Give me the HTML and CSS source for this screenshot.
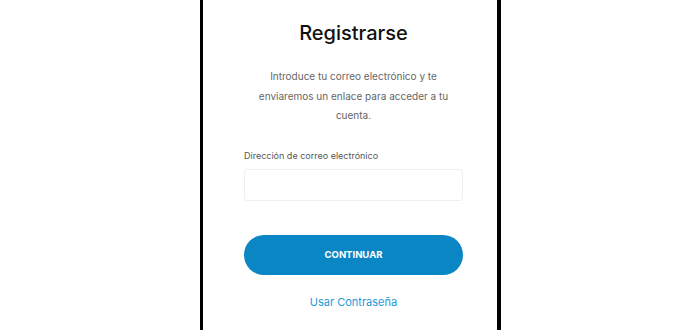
FILE: index.html
```html
<!DOCTYPE html>
<html lang="es">
<head>
    <meta charset="UTF-8">
    <meta name="viewport" content="width=device-width, initial-scale=1.0">
    <title>Registrarse</title>
    <link rel="stylesheet" href="styles.css">
</head>
<body>
    <div class="frame">
        <div class="signup">
            <h1>Registrarse</h1>
            <p class="intro">Introduce tu correo electrónico y te enviaremos un enlace para acceder a tu cuenta.</p>

            <label class="field-label" for="email">Dirección de correo electrónico</label>
            <input type="email" id="email" class="field">

            <button class="primary">CONTINUAR</button>
            <a href="#" class="link">Usar Contraseña</a>
        </div>
    </div>
</body>
</html>
```

FILE: styles.css
```css
body {
    margin: 0;
    background-color: #fff;
    font-family: Inter, "Noto Sans", sans-serif;
}
.frame {
    width: 294px;
    height: 330px;
    margin-left: 200px;
    border-left: 3px solid #000;
    border-right: 4px solid #000;
    background-color: #fff;
    overflow: hidden;
}
.signup {
    display: flex;
    flex-direction: column;
    padding: 21px 34px 0 41px;
}
.signup h1 {
    margin: 0;
    text-align: center;
    font-size: 20px;
    font-weight: 500;
    color: #111;
}
.intro {
    margin: 22px auto 0;
    width: 200px;
    text-align: center;
    font-size: 10px;
    line-height: 19.5px;
    color: #666;
}
.field-label {
    margin-top: 24px;
    font-size: 9px;
    color: #555;
}
.field {
    margin-top: 8px;
    height: 32px;
    box-sizing: border-box;
    border: 1px solid #eeeef5;
    border-radius: 3px;
    outline: none;
}
.primary {
    margin-top: 34px;
    height: 40px;
    border: none;
    border-radius: 20px;
    background-color: #0b86c5;
    color: #fff;
    font-family: inherit;
    font-size: 9.5px;
    font-weight: 700;
}
.link {
    margin-top: 20px;
    align-self: center;
    font-size: 11px;
    color: #1c9ad6;
    text-decoration: none;
}
```
